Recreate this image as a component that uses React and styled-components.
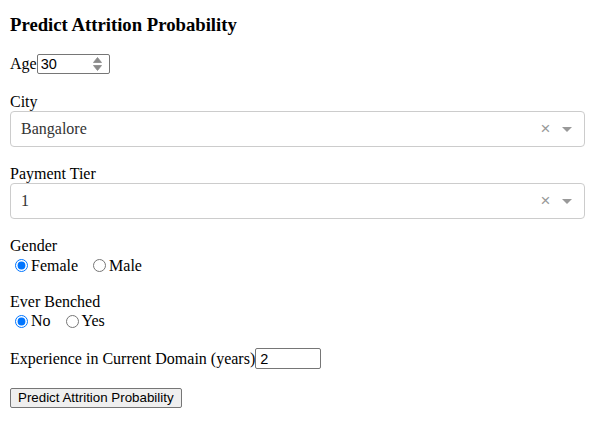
import React from "react";
import styled, { createGlobalStyle } from "styled-components";

const Global = createGlobalStyle`
  html, body { margin: 0; padding: 0; background: #fff; }
  body { font-family: "Liberation Serif", "Times New Roman", serif; font-size: 16px; color: #000; }
`;

const Page = styled.div`
  padding: 14px 0 0 10px;
  width: 575px;
  display: flex;
  flex-direction: column;
`;

const Title = styled.h3`
  margin: 0 0 18px;
  font-size: 18.72px;
  font-weight: bold;
  line-height: 21.5px;
`;

const Form = styled.div`
  display: flex;
  flex-direction: column;
  gap: 18px;
`;

const InlineField = styled.div`
  display: flex;
  align-items: center;
  height: ${(p) => p.$h || 20}px;
`;

const Field = styled.div`
  display: flex;
  flex-direction: column;
`;

const Label = styled.label`
  display: block;
  line-height: 18px;
  height: 18px;
`;

const InputBox = styled.div`
  box-sizing: border-box;
  width: ${(p) => p.$w}px;
  height: ${(p) => p.$h || 20}px;
  border: 1px solid #767676;
  border-radius: 2px;
  background: #fff;
  display: flex;
  align-items: center;
  padding-left: ${(p) => p.$pl || 3}px;
`;

const BareInput = styled.input`
  flex: 1;
  min-width: 0;
  border: 0;
  outline: none;
  padding: 0;
  margin: 0;
  background: transparent;
  font-family: "Liberation Sans", Arial, sans-serif;
  font-size: 14.5px;
  color: #000;
`;

const Spinner = styled.svg`
  width: 11px;
  height: 16px;
  margin-right: 6px;
  flex: none;
`;

const Select = styled.div`
  box-sizing: border-box;
  height: 36px;
  border: 1px solid #ccc;
  border-radius: 4px;
  display: flex;
  align-items: center;
  padding-left: 10px;
  color: #333;
  background: #fff;
`;

const SelectValue = styled.span`
  flex: 1;
`;

const Clear = styled.span`
  color: #999;
  font-family: "Liberation Sans", Arial, sans-serif;
  font-size: 17px;
  line-height: 1;
  width: 17px;
  text-align: center;
`;

const Arrow = styled.span`
  width: 25px;
  display: flex;
  justify-content: center;
  margin-right: 5px;
  &::after {
    content: "";
    border-style: solid;
    border-width: 5px 5px 2.5px;
    border-color: #999 transparent transparent;
    margin-top: 3px;
  }
`;

const RadioRow = styled.div`
  box-sizing: border-box;
  display: flex;
  align-items: center;
  height: ${(p) => p.$h || 20}px;
  padding-top: 2px;
`;

const RadioLabel = styled.label`
  display: inline-flex;
  align-items: center;
  margin-right: 10px;
`;

const Radio = styled.input`
  margin: 0 3px 0 5px;
  width: 13px;
  height: 13px;
`;

const Button = styled.button`
  align-self: flex-start;
  height: 20px;
  padding: 1px 7px;
  font-family: "Liberation Sans", Arial, sans-serif;
  font-size: 13.33px;
  border: 1px solid #767676;
  border-radius: 2px;
  background: #efefef;
  color: #000;
`;

function NumberInput({ value }) {
  return (
    <InputBox $w={73} $pl={3}>
      <BareInput type="text" defaultValue={value} />
      <Spinner viewBox="0 0 11 16">
        <path d="M5.5 1.5 L9.5 6.5 H1.5 Z" fill="#8a8a8a" stroke="#8a8a8a" strokeWidth="0.8" strokeLinejoin="round" />
        <path d="M5.5 14.5 L9.5 9.5 H1.5 Z" fill="#8a8a8a" stroke="#8a8a8a" strokeWidth="0.8" strokeLinejoin="round" />
      </Spinner>
    </InputBox>
  );
}

function Dropdown({ value }) {
  return (
    <Select>
      <SelectValue>{value}</SelectValue>
      <Clear>×</Clear>
      <Arrow />
    </Select>
  );
}

function Radios({ name, options, checked, h }) {
  return (
    <RadioRow $h={h}>
      {options.map((o) => (
        <RadioLabel key={o}>
          <Radio type="radio" name={name} defaultChecked={o === checked} />
          {o}
        </RadioLabel>
      ))}
    </RadioRow>
  );
}

export default function App() {
  return (
    <>
      <Global />
      <Page>
        <Title>Predict Attrition Probability</Title>
        <Form>
          <InlineField $h={21}>
            <span>Age</span>
            <NumberInput value="30" />
          </InlineField>
          <Field>
            <Label>City</Label>
            <Dropdown value="Bangalore" />
          </Field>
          <Field>
            <Label>Payment Tier</Label>
            <Dropdown value="1" />
          </Field>
          <Field>
            <Label>Gender</Label>
            <Radios name="gender" options={["Female", "Male"]} checked="Female" />
          </Field>
          <Field>
            <Label>Ever Benched</Label>
            <Radios name="bench" options={["No", "Yes"]} checked="No" h={19} />
          </Field>
          <InlineField $h={22}>
            <span>Experience in Current Domain (years)</span>
            <InputBox $w={66} $h={21} $pl={4}>
              <BareInput type="text" defaultValue="2" />
            </InputBox>
          </InlineField>
          <Button>Predict Attrition Probability</Button>
        </Form>
      </Page>
    </>
  );
}
